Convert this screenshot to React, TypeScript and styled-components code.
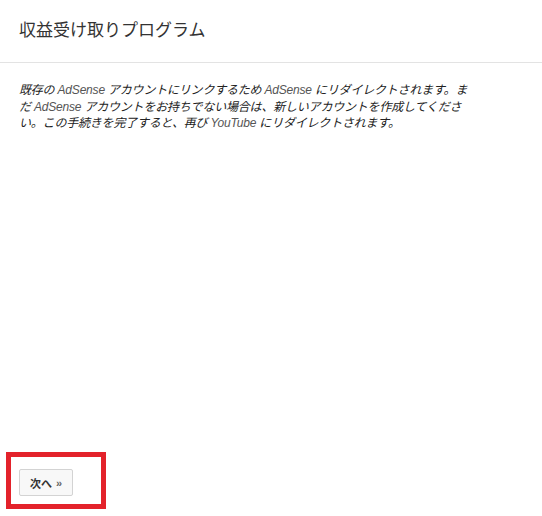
import styled, { createGlobalStyle } from 'styled-components'

const GlobalStyle = createGlobalStyle`
  html, body {
    margin: 0;
    padding: 0;
    background: #fff;
  }
  body {
    font-family: "Liberation Sans", "Noto Sans CJK JP", Arial, sans-serif;
    color: #222;
  }
`

const Page = styled.div`
  display: flex;
  flex-direction: column;
  min-height: 100vh;
  box-sizing: border-box;
`

const Header = styled.div`
  padding: 19px 19px 20px;
  border-bottom: 1px solid #e3e3e3;
`

const Title = styled.h1`
  margin: 0;
  font-size: 17px;
  line-height: 23px;
  font-weight: normal;
  color: #333;
`

const Content = styled.div`
  flex: 1;
  padding: 19px 19px 0;
`

const Notice = styled.p`
  margin: 0;
  font-size: 12px;
  line-height: 16.5px;
  letter-spacing: -0.2px;
  font-style: italic;
  color: #222;
  white-space: nowrap;
`

const Brand = styled.span`
  color: #555;
`

const Footer = styled.div`
  display: flex;
  padding: 0 0 7px 6px;
`

// red annotation frame around the button
const Highlight = styled.div`
  display: flex;
  padding: 12px 28px 8px 8px;
  border: 5px solid #e3222b;
`

const NextButton = styled.button`
  display: flex;
  align-items: center;
  gap: 4px;
  height: 27px;
  padding: 0 10px 0 10px;
  background: #f8f8f8;
  border: 1px solid #d3d3d3;
  border-radius: 2px;
  font-family: "Liberation Sans", "Noto Sans CJK JP", Arial, sans-serif;
  font-size: 11px;
  font-weight: bold;
  color: #333;
  cursor: pointer;
`

const Chevron = styled.span`
  color: #666;
  font-size: 11px;
`

export default function App() {
  return (
    <Page>
      <GlobalStyle />
      <Header>
        <Title>収益受け取りプログラム</Title>
      </Header>
      <Content>
        <Notice>
          既存の <Brand>AdSense</Brand> アカウントにリンクするため <Brand>AdSense</Brand> にリダイレクトされます。ま
          <br />
          だ <Brand>AdSense</Brand> アカウントをお持ちでない場合は、新しいアカウントを作成してくださ
          <br />
          い。この手続きを完了すると、再び <Brand>YouTube</Brand> にリダイレクトされます。
        </Notice>
      </Content>
      <Footer>
        <Highlight>
          <NextButton>
            次へ <Chevron>»</Chevron>
          </NextButton>
        </Highlight>
      </Footer>
    </Page>
  )
}
